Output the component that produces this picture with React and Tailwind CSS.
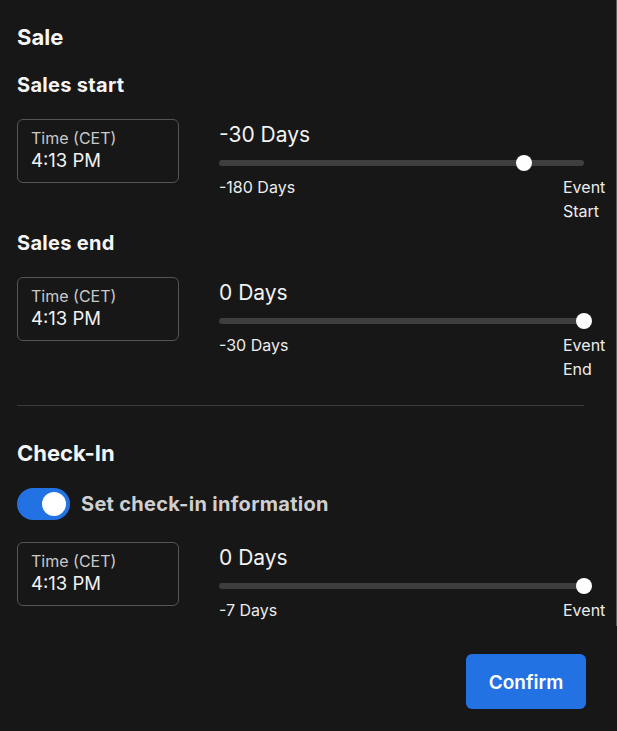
import React from 'react';

const font = { fontFamily: 'Inter, "Noto Sans", sans-serif' };

function TimeBox() {
  return (
    <div className="w-[162px] h-[64px] shrink-0 rounded-[6px] border border-[#555555] px-[13px] pt-[8px]">
      <div className="text-[16px] leading-[21px] text-[#c9c9c9]">Time (CET)</div>
      <div className="text-[18.5px] leading-[23px] text-[#f2f2f2]">4:13 PM</div>
    </div>
  );
}

function DaySlider({ value, pct, min, endLines }) {
  return (
    <div className="flex-1 pt-[4px]">
      <div className="text-[21px] leading-[24px] text-[#f2f2f2]">{value}</div>
      <div className="relative mt-[13px] h-[6px] rounded-full bg-[#3e3e3e]">
        <div
          className="absolute top-1/2 h-[16px] w-[16px] -translate-x-1/2 -translate-y-1/2 rounded-full bg-white"
          style={{ left: `${pct}%` }}
        />
      </div>
      <div className="mt-[9px] flex justify-between text-[16px] leading-[24px] text-[#ececec]">
        <span>{min}</span>
        <span className="-mr-[21px] w-[42px]">
          {endLines.map((l) => (
            <div key={l}>{l}</div>
          ))}
        </span>
      </div>
    </div>
  );
}

function Row({ value, pct, min, endLines }) {
  return (
    <div className="flex gap-[40px]">
      <TimeBox />
      <DaySlider value={value} pct={pct} min={min} endLines={endLines} />
    </div>
  );
}

export default function App() {
  return (
    <div className="w-[617px] h-[731px] bg-[#171717] flex flex-col" style={font}>
      {/* scroll area */}
      <div className="h-[626px] overflow-hidden border-r border-[#5c5c5c] pl-[17px] pr-[32px] pt-[23px]">
        <h2 className="text-[22px] leading-[28px] font-bold text-[#f5f5f5]">Sale</h2>

        <h3 className="mt-[22px] text-[20px] leading-[24px] font-bold tracking-[0.015em] text-[#f5f5f5]">Sales start</h3>
        <div className="mt-[22px]">
          <Row value="-30 Days" pct={83.5} min="-180 Days" endLines={['Event', 'Start']} />
        </div>

        <h3 className="mt-[8px] text-[20px] leading-[24px] font-bold tracking-[0.015em] text-[#f5f5f5]">Sales end</h3>
        <div className="mt-[22px]">
          <Row value="0 Days" pct={100} min="-30 Days" endLines={['Event', 'End']} />
        </div>

        <div className="mt-[24px] h-px bg-[#3a3a3a]" />

        <h2 className="mt-[33px] text-[22px] leading-[28px] font-bold text-[#f5f5f5]">Check-In</h2>
        <div className="mt-[21px] flex items-center gap-[11px]">
          <div className="relative h-[32px] w-[53px] rounded-full bg-[#2372e4]">
            <div className="absolute right-[4px] top-1/2 h-[24px] w-[24px] -translate-y-1/2 rounded-full bg-white" />
          </div>
          <span className="text-[20px] leading-[24px] font-bold tracking-[0.015em] text-[#cfcfcf]">Set check-in information</span>
        </div>
        <div className="mt-[22px]">
          <Row value="0 Days" pct={100} min="-7 Days" endLines={['Event']} />
        </div>
      </div>

      {/* footer */}
      <div className="flex justify-end pr-[31px] pt-[28px]">
        <button className="h-[55px] w-[120px] rounded-[6px] bg-[#2372e4] pt-[4px] text-[19px] font-semibold text-white">
          Confirm
        </button>
      </div>
    </div>
  );
}
